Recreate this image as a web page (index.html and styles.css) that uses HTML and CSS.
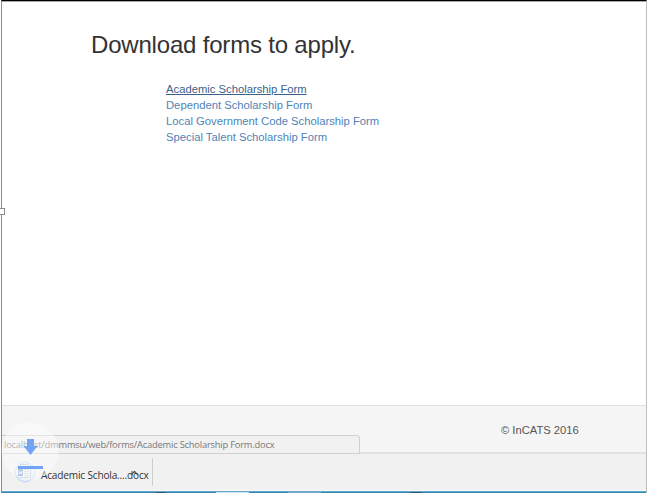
FILE: index.html
```
<!DOCTYPE html>
<html lang="en">
<head>
<meta charset="utf-8">
<title>Scholarship forms</title>
<link rel="stylesheet" href="styles.css">
</head>
<body>
<div class="window">
  <main class="page">
    <h1 class="title"><span>Download forms to apply.</span></h1>
    <ul class="forms">
      <li><a class="link active">Academic Scholarship Form</a></li>
      <li><a class="link">Dependent Scholarship Form</a></li>
      <li><a class="link">Local Government Code Scholarship Form</a></li>
      <li><a class="link">Special Talent Scholarship Form</a></li>
    </ul>
  </main>
  <footer class="footer">© InCATS 2016</footer>
  <div class="downloads">
    <svg class="doc" width="22" height="22" viewBox="0 0 22 22">
      <circle cx="11" cy="11" r="9.7" fill="#eef1f5" stroke="#c8dcf7" stroke-width="1.4"/>
      <path d="M6.500 3.500h7l3 3v10h-10z" fill="#f5f7f8" stroke="#b9c1c9"/>
      <path d="M10 8.500h5M10 10.500h5M10 12.500h5M10 14.500h5" stroke="#b9c1c9" stroke-width=".7"/>
      <path d="M4 8h5v7H4z" fill="#7f9fcf"/>
      <path d="M4.800 10l.8 3 .9-2 .9 2 .8-3" fill="none" stroke="#fff" stroke-width=".7"/>
    </svg>
    <span class="file">Academic Schola....docx</span>
    <svg class="chevron" width="9" height="6" viewBox="0 0 9 6"><path d="M1 5l3.500-3.500L8 5" fill="none" stroke="#555" stroke-width="1.400"/></svg>
    <span class="divider"></span>
  </div>
  <div class="taskbar"><i class="dark"></i><i class="light"></i><i class="pale"></i><i class="dark second"></i></div>
</div>
<div class="status"><span>localhost/dmmmsu/web/forms/Academic Scholarship Form.docx</span></div>
<svg class="arrow" width="58" height="58" viewBox="0 0 58 58">
  <circle cx="29" cy="29" r="28.500" fill="#fff" fill-opacity=".45"/>
  <path d="M26 17h7v7h3.500l-7 9-7-9H26z" fill="#72a3f5"/>
  <path d="M17 44h25v3H17z" fill="#72a3f5"/>
</svg>
<span class="handle"></span>
</body>
</html>
```
FILE: styles.css
```
* { box-sizing: border-box; }
body {
  margin: 0;
  width: 648px;
  height: 493px;
  position: relative;
  overflow: hidden;
  background: #fff;
  font-family: "Liberation Sans", Arial, sans-serif;
}
.window {
  width: 646px;
  height: 493px;
  margin-left: 1px;
  border-left: 1px solid #8a8b8d;
  border-right: 1px solid #bdbdbd;
  border-top: 1px solid #000;
  display: flex;
  flex-direction: column;
}
.page {
  height: 404px;
  border-top: 1px solid #aaa;
  padding: 29px 0 0 89px;
}
.title {
  margin: 0;
  font-size: 24px;
  line-height: 28px;
  letter-spacing: -0.19px;
  font-weight: 400;
  color: #333;
  white-space: nowrap;
}
.forms {
  list-style: none;
  margin: 23.4px 0 0 75px;
  padding: 0;
  font-size: 11.26px;
  line-height: 15.8px;
  white-space: nowrap;
}
.link { color: #4f83b6; }
.active {
  color: #3c618a;
  text-decoration: underline;
}
.footer {
  height: 49px;
  background: #f5f5f5;
  border-top: 1px solid #e1e1e1;
  border-bottom: 2px solid #e2e2e2;
  padding: 16px 0 0 499px;
  font-size: 11.2px;
  line-height: 17px;
  color: #555;
}
.downloads {
  height: 37px;
  background: #f1f1f1;
  border-bottom: 1px solid #fafafa;
  display: flex;
  align-items: flex-start;
  padding: 4px 0 0 12px;
}
.doc { margin-top: 3px; }
.file {
  margin: 9px 0 0 5px;
  font: 10.1px/16px "Open Sans", sans-serif;
  letter-spacing: -0.18px;
  color: #333;
  white-space: nowrap;
  width: 108px;
}
.chevron { margin: 12px 0 0 -19px; }
.divider {
  margin-left: 13px;
  width: 1px;
  height: 28px;
  background: #ccc;
}
.taskbar {
  height: 2px;
  background: #2f88b8;
  border-top: 1px solid #66a6c9;
  display: flex;
}
.taskbar i { height: 1px; }
.dark { width: 10px; margin-left: 154px; background: #35556a; }
.light { width: 33px; margin-left: 50px; background: #cfdfe8; }
.pale { width: 33px; margin-left: 39px; background: #76acd0; }
.taskbar .second { width: 12px; margin-left: 89px; }
.status {
  position: absolute;
  left: 2px;
  top: 435px;
  width: 358px;
  height: 19px;
  border: 1px solid #d0d0d0;
  border-left: 0;
  border-radius: 0 4px 0 0;
  background: #f1f1f1;
  padding-left: 2px;
  font: 9.3px/18px "Open Sans", sans-serif;
  letter-spacing: -0.18px;
  color: #777;
  white-space: nowrap;
}
.arrow {
  position: absolute;
  left: 1px;
  top: 422px;
}
.handle {
  position: absolute;
  left: -2px;
  top: 208px;
  width: 7px;
  height: 7px;
  border: 1px solid #8a8b8d;
  background: #fff;
}
```
